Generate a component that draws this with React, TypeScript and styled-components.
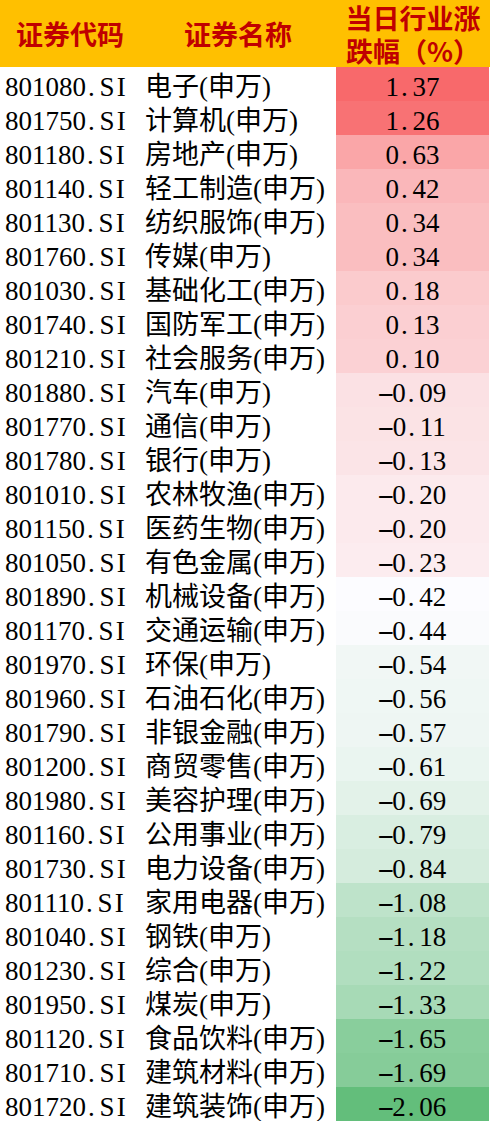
import React from "react";
import styled, { createGlobalStyle } from "styled-components";

const GlobalStyle = createGlobalStyle`
  html, body {
    margin: 0;
    padding: 0;
    background: #ffffff;
  }
`;

const Sheet = styled.div`
  width: 490px;
  font-family: "Liberation Serif", "Noto Sans CJK SC", serif;
  color: #000000;
`;

const HeaderRow = styled.div`
  display: grid;
  grid-template-columns: 140px 196px 154px;
  height: 67px;
  background: #ffc000;
  color: #c00000;
  font-family: "Noto Sans CJK SC", sans-serif;
  font-size: 27px;
  font-weight: 700;
`;

const HeaderCell = styled.div`
  display: flex;
  align-items: center;
  justify-content: center;
  text-align: center;
  line-height: 33px;
`;

const Row = styled.div`
  display: grid;
  grid-template-columns: 140px 196px 153px;
  height: 34px;
  font-size: 27px;
`;

const Cell = styled.div<{ $center?: boolean }>`
  box-sizing: border-box;
  height: 34px;
  padding: 7px 0 0 ${(p) => (p.$center ? "0" : "5px")};
  line-height: 27px;
  white-space: nowrap;
  text-align: ${(p) => (p.$center ? "center" : "left")};
`;

const ValueCell = styled(Cell)<{ $bg: string }>`
  background: ${(p) => p.$bg};
`;

// SimSun gives every latin glyph half an em, so pad the narrow ones
const Half = styled.span<{ $dash?: boolean; $left?: boolean }>`
  display: inline-block;
  width: 0.5em;
  text-align: ${(p) => (p.$left ? "left" : "center")};
  padding-left: ${(p) => (p.$left ? "2px" : "0")};
  box-sizing: border-box;
  transform: ${(p) => (p.$dash ? "translateY(-1px) scaleX(1.9)" : "none")};
`;

const mono = (text: string) =>
  text.split("").map((c, i) =>
    c === "." ? (
      <Half key={i} $left>
        {c}
      </Half>
    ) : c === "-" ? (
      <Half key={i} $dash>
        {c}
      </Half>
    ) : c === "I" ? (
      <Half key={i}>{c}</Half>
    ) : (
      c
    )
  );

const rows: [string, string, string][] = [
  ["801080.SI", "电子", "1.37"],
  ["801750.SI", "计算机", "1.26"],
  ["801180.SI", "房地产", "0.63"],
  ["801140.SI", "轻工制造", "0.42"],
  ["801130.SI", "纺织服饰", "0.34"],
  ["801760.SI", "传媒", "0.34"],
  ["801030.SI", "基础化工", "0.18"],
  ["801740.SI", "国防军工", "0.13"],
  ["801210.SI", "社会服务", "0.10"],
  ["801880.SI", "汽车", "-0.09"],
  ["801770.SI", "通信", "-0.11"],
  ["801780.SI", "银行", "-0.13"],
  ["801010.SI", "农林牧渔", "-0.20"],
  ["801150.SI", "医药生物", "-0.20"],
  ["801050.SI", "有色金属", "-0.23"],
  ["801890.SI", "机械设备", "-0.42"],
  ["801170.SI", "交通运输", "-0.44"],
  ["801970.SI", "环保", "-0.54"],
  ["801960.SI", "石油石化", "-0.56"],
  ["801790.SI", "非银金融", "-0.57"],
  ["801200.SI", "商贸零售", "-0.61"],
  ["801980.SI", "美容护理", "-0.69"],
  ["801160.SI", "公用事业", "-0.79"],
  ["801730.SI", "电力设备", "-0.84"],
  ["801110.SI", "家用电器", "-1.08"],
  ["801040.SI", "钢铁", "-1.18"],
  ["801230.SI", "综合", "-1.22"],
  ["801950.SI", "煤炭", "-1.33"],
  ["801120.SI", "食品饮料", "-1.65"],
  ["801710.SI", "建筑材料", "-1.69"],
  ["801720.SI", "建筑装饰", "-2.06"],
];

// excel 3-colour scale: green (min) -> white (median) -> red (max)
const nums = rows.map((r) => parseFloat(r[2]));
const max = Math.max(...nums);
const min = Math.min(...nums);
const mid = [...nums].sort((a, b) => a - b)[Math.floor(nums.length / 2)];

const mix = (a: number[], b: number[], t: number) =>
  "rgb(" + a.map((x, i) => Math.round(x + (b[i] - x) * t)).join(",") + ")";

const colour = (v: number) => {
  const white = [252, 252, 255];
  if (v >= mid) return mix(white, [248, 105, 107], (v - mid) / (max - mid));
  return mix(white, [99, 190, 123], (mid - v) / (mid - min));
};

const App: React.FC = () => {
  return (
    <Sheet>
      <GlobalStyle />
      <HeaderRow>
        <HeaderCell>证券代码</HeaderCell>
        <HeaderCell>证券名称</HeaderCell>
        <HeaderCell>当日行业涨跌幅（%）</HeaderCell>
      </HeaderRow>
      {rows.map(([code, name, value]) => (
        <Row key={code}>
          <Cell>{mono(code)}</Cell>
          <Cell>{name}(申万)</Cell>
          <ValueCell $center $bg={colour(parseFloat(value))}>
            {mono(value)}
          </ValueCell>
        </Row>
      ))}
    </Sheet>
  );
};

export default App;
